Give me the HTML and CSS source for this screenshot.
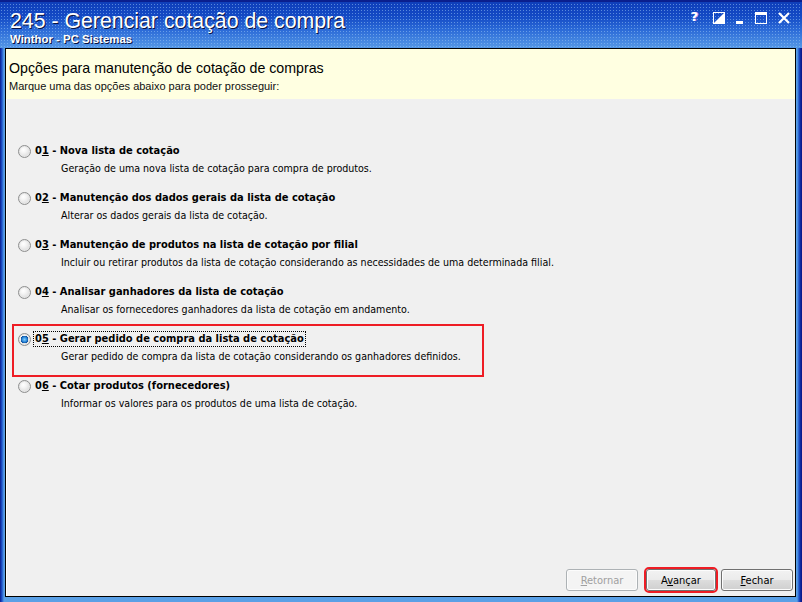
FILE: index.html
```html
<!DOCTYPE html>
<html lang="pt-BR">
<head>
    <meta charset="UTF-8">
    <title>245 - Gerenciar cotação de compra</title>
    <link rel="stylesheet" href="styles.css">
</head>
<body>
    <div class="window">
        <div class="titleBar">
            <div class="titleText">
                <div class="routineName">245 - Gerenciar cotação de compra</div>
                <div class="systemName">Winthor - PC Sistemas</div>
            </div>
            <div class="titleButtons">
                <span class="helpBtn">?</span>
                <svg width="12" height="12" viewBox="0 0 12 12">
                    <rect x="0.5" y="0.5" width="11" height="11" fill="none" stroke="#fff"/>
                    <polygon points="11,1 11,11 1,11" fill="#fff"/>
                </svg>
                <svg width="8" height="12" viewBox="0 0 8 12">
                    <rect x="0" y="9" width="7" height="3" fill="#fff"/>
                </svg>
                <svg width="12" height="12" viewBox="0 0 12 12">
                    <rect x="0.5" y="0.5" width="11" height="11" fill="none" stroke="#fff"/>
                    <rect x="0" y="0" width="12" height="3" fill="#fff"/>
                </svg>
                <svg width="12" height="12" viewBox="0 0 12 12">
                    <path d="M1 1 L11 11 M11 1 L1 11" stroke="#fff" stroke-width="2.2"/>
                </svg>
            </div>
        </div>

        <div class="client">
            <div class="wizardHeader">
                <h1>Opções para manutenção de cotação de compras</h1>
                <p>Marque uma das opções abaixo para poder prosseguir:</p>
            </div>

            <div class="optionList">
                <div class="option">
                    <span class="radio"></span>
                    <span class="optionLabel">0<u>1</u> - Nova lista de cotação</span>
                    <span class="optionDesc">Geração de uma nova lista de cotação para compra de produtos.</span>
                </div>
                <div class="option">
                    <span class="radio"></span>
                    <span class="optionLabel">0<u>2</u> - Manutenção dos dados gerais da lista de cotação</span>
                    <span class="optionDesc">Alterar os dados gerais da lista de cotação.</span>
                </div>
                <div class="option">
                    <span class="radio"></span>
                    <span class="optionLabel">0<u>3</u> - Manutenção de produtos na lista de cotação por filial</span>
                    <span class="optionDesc">Incluir ou retirar produtos da lista de cotação considerando as necessidades de uma determinada filial.</span>
                </div>
                <div class="option">
                    <span class="radio"></span>
                    <span class="optionLabel">0<u>4</u> - Analisar ganhadores da lista de cotação</span>
                    <span class="optionDesc">Analisar os fornecedores ganhadores da lista de cotação em andamento.</span>
                </div>
                <div class="option marked">
                    <span class="radio checked"></span>
                    <span class="optionLabel focused">0<u>5</u> - Gerar pedido de compra da lista de cotação</span>
                    <span class="optionDesc">Gerar pedido de compra da lista de cotação considerando os ganhadores definidos.</span>
                </div>
                <div class="option">
                    <span class="radio"></span>
                    <span class="optionLabel">0<u>6</u> - Cotar produtos (fornecedores)</span>
                    <span class="optionDesc">Informar os valores para os produtos de uma lista de cotação.</span>
                </div>
            </div>

            <div class="buttonBar">
                <button class="wizBtn backBtn" disabled><u>R</u>etornar</button>
                <button class="wizBtn nextBtn marked">A<u>v</u>ançar</button>
                <button class="wizBtn"><u>F</u>echar</button>
            </div>
        </div>
    </div>
</body>
</html>
```

FILE: styles.css
```css
body {
    margin: 0;
    padding: 0;
    background-color: #0a1b8c;
    font-family: "DejaVu Sans Condensed", "Liberation Sans", sans-serif;
    font-size: 11px;
    color: #000000;
}

.window {
    width: 802px;
    height: 602px;
    display: flex;
    flex-direction: column;
    box-sizing: border-box;
    background: linear-gradient(to right, #0a1b8c 0, #1d55cc 2px, #5aa0e6 4px, #5aa0e6 797px, #1d55cc 799px, #0a1b8c 801px);
    padding: 0 6px 5px 5px;
}

/* title bar */

.titleBar {
    height: 48px;
    margin: 0 -6px 0 -5px;
    padding: 0 10px;
    display: flex;
    justify-content: space-between;
    border-top: 2px solid #0a1f8e;
    box-sizing: border-box;
    background-image:
        radial-gradient(circle, rgba(150, 195, 245, 0.55) 0.8px, transparent 1px),
        linear-gradient(#0f3fba 0, #1349c4 30%, #2d6cd8 62%, #5598e6 100%);
    background-size: 3px 3px, 100% 100%;
    background-position: 0 1px, 0 0;
}

.titleText {
    color: #ffffff;
    text-shadow: 1px 1px 0 #0a1240;
}

.routineName {
    font-family: "Liberation Sans", Arial, sans-serif;
    font-size: 21.3px;
    line-height: 26px;
    margin-top: 6px;
}

.systemName {
    font-family: "Liberation Sans", Arial, sans-serif;
    font-weight: bold;
    font-size: 11.4px;
    line-height: 13px;
    margin-top: -1px;
}

.titleButtons {
    display: flex;
    align-items: flex-start;
    gap: 11px;
    padding-top: 8px;
    margin-right: 2px;
}

.titleButtons svg {
    margin-top: 2px;
}

.helpBtn {
    color: #ffffff;
    font-family: "DejaVu Sans", sans-serif;
    font-weight: bold;
    font-size: 13px;
    line-height: 14px;
    text-shadow: 1px 0 0 #c8a0f0;
    margin-right: 4px;
}

/* client area */

.client {
    flex: 1;
    display: flex;
    flex-direction: column;
    border: 1px solid #000000;
    background-color: #f0f0f0;
    box-shadow: inset 1px 0 0 #ffffff;
}

.wizardHeader {
    height: 50px;
    background-color: #ffffe1;
    padding: 0 0 0 3px;
    box-sizing: border-box;
}

.wizardHeader h1 {
    font-family: "Liberation Sans", Arial, sans-serif;
    font-weight: normal;
    font-size: 14.2px;
    line-height: 18px;
    margin: 10px 0 0 0;
}

.wizardHeader p {
    font-family: "Liberation Sans", Arial, sans-serif;
    font-size: 11px;
    line-height: 14px;
    margin: 2px 0 0 0;
    color: #101010;
}

/* option list */

.optionList {
    flex: 1;
    padding: 44px 0 0 12px;
    display: flex;
    flex-direction: column;
    gap: 14px;
}

.option {
    display: grid;
    grid-template-columns: 15px auto;
    grid-template-rows: 16px 16px;
    row-gap: 1px;
    align-items: center;
    position: relative;
}

.option.marked::after {
    content: "";
    position: absolute;
    left: -6px;
    top: -7px;
    width: 468px;
    height: 49px;
    border: 2px solid #ee1c24;
}

.radio {
    width: 11px;
    height: 11px;
    border-radius: 50%;
    border: 1px solid #8e8f8f;
    background: radial-gradient(circle at 40% 35%, #ffffff 0, #f4f4f4 30%, #cfcfcf 100%);
    box-shadow: inset 0 0 0 1px #e6e6e6;
}

.radio.checked {
    background:
        radial-gradient(circle at 50% 50%, #7fd0ff 0, #2a86d8 2.5px, #0b4f9e 3.6px, transparent 4px),
        radial-gradient(circle at 40% 35%, #ffffff 0, #f4f4f4 30%, #cfcfcf 100%);
}

.optionLabel {
    font-weight: bold;
    white-space: nowrap;
    justify-self: start;
    padding: 0 1px;
    line-height: 14px;
    border: 1px dotted transparent;
}

.optionLabel.focused {
    border-color: #000000;
}

.optionDesc {
    grid-column: 2;
    padding-left: 28px;
    white-space: nowrap;
    font-size: 10.6px;
    color: #000000;
}

/* buttons */

.buttonBar {
    display: flex;
    justify-content: flex-end;
    gap: 5px;
    padding: 0 2px 5px 0;
}

.wizBtn {
    width: 72px;
    height: 22px;
    font-family: "DejaVu Sans Condensed", "Liberation Sans", sans-serif;
    font-size: 11px;
    color: #000000;
    border: 1px solid #707070;
    border-radius: 3px;
    background: linear-gradient(#f2f2f2 0, #ebebeb 50%, #dddddd 51%, #cfcfcf 100%);
    box-shadow: inset 0 0 0 1px #fcfcfc;
    padding: 0;
}

.backBtn {
    margin-right: 3px;
}

.nextBtn {
    width: 70px;
}

.wizBtn:disabled {
    color: #a0a0a0;
    border-color: #adb2b5;
    background: #f4f4f4;
}

.wizBtn.marked {
    outline: 2px solid #ee1c24;
    outline-offset: 0;
}
```
